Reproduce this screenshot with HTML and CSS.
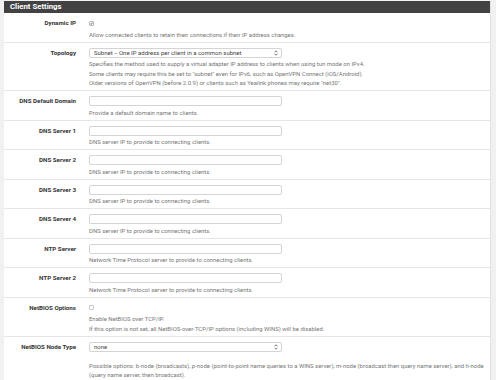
FILE: index.html
```html
<!DOCTYPE html>
<html lang="en">
<head>
    <meta charset="UTF-8">
    <meta name="viewport" content="width=device-width, initial-scale=1.0">
    <title>OpenVPN Server - Client Settings</title>
    <link rel="stylesheet" href="styles.css">
</head>
<body>
    <div class="panel">
        <div class="panel-heading">Client Settings</div>
        <div class="panel-body">

            <div class="form-row">
                <div class="row-label">Dynamic IP</div>
                <div class="row-field">
                    <div class="check-line"><span class="checkbox checked">&#10003;</span></div>
                    <div class="help">Allow connected clients to retain their connections if their IP address changes.</div>
                </div>
            </div>

            <div class="form-row">
                <div class="row-label">Topology</div>
                <div class="row-field">
                    <div class="select-box">
                        <span>Subnet -- One IP address per client in a common subnet</span>
                        <svg class="arrows" width="4" height="6" viewBox="0 0 4 6">
                            <path d="M0.5 2.3 L2 0.8 L3.5 2.3 M0.5 3.7 L2 5.2 L3.5 3.7" fill="none" stroke="#555" stroke-width="0.8"/>
                        </svg>
                    </div>
                    <div class="help">
                        Specifies the method used to supply a virtual adapter IP address to clients when using tun mode on IPv4.<br>
                        Some clients may require this be set to "subnet" even for IPv6, such as OpenVPN Connect (iOS/Android).<br>
                        Older versions of OpenVPN (before 2.0.9) or clients such as Yealink phones may require "net30".
                    </div>
                </div>
            </div>

            <div class="form-row">
                <div class="row-label">DNS Default Domain</div>
                <div class="row-field">
                    <input class="text-input" type="text">
                    <div class="help">Provide a default domain name to clients.</div>
                </div>
            </div>

            <div class="form-row">
                <div class="row-label">DNS Server 1</div>
                <div class="row-field">
                    <input class="text-input" type="text">
                    <div class="help">DNS server IP to provide to connecting clients.</div>
                </div>
            </div>

            <div class="form-row">
                <div class="row-label">DNS Server 2</div>
                <div class="row-field">
                    <input class="text-input" type="text">
                    <div class="help">DNS server IP to provide to connecting clients.</div>
                </div>
            </div>

            <div class="form-row">
                <div class="row-label">DNS Server 3</div>
                <div class="row-field">
                    <input class="text-input" type="text">
                    <div class="help">DNS server IP to provide to connecting clients.</div>
                </div>
            </div>

            <div class="form-row">
                <div class="row-label">DNS Server 4</div>
                <div class="row-field">
                    <input class="text-input" type="text">
                    <div class="help">DNS server IP to provide to connecting clients.</div>
                </div>
            </div>

            <div class="form-row">
                <div class="row-label">NTP Server</div>
                <div class="row-field">
                    <input class="text-input" type="text">
                    <div class="help">Network Time Protocol server to provide to connecting clients.</div>
                </div>
            </div>

            <div class="form-row">
                <div class="row-label">NTP Server 2</div>
                <div class="row-field">
                    <input class="text-input" type="text">
                    <div class="help">Network Time Protocol server to provide to connecting clients.</div>
                </div>
            </div>

            <div class="form-row">
                <div class="row-label">NetBIOS Options</div>
                <div class="row-field">
                    <div class="check-line"><span class="checkbox"></span></div>
                    <div class="help">
                        Enable NetBIOS over TCP/IP.<br>
                        If this option is not set, all NetBIOS-over-TCP/IP options (including WINS) will be disabled.
                    </div>
                </div>
            </div>

            <div class="form-row">
                <div class="row-label">NetBIOS Node Type</div>
                <div class="row-field">
                    <div class="select-box">
                        <span>none</span>
                        <svg class="arrows" width="4" height="6" viewBox="0 0 4 6">
                            <path d="M0.5 2.3 L2 0.8 L3.5 2.3 M0.5 3.7 L2 5.2 L3.5 3.7" fill="none" stroke="#555" stroke-width="0.8"/>
                        </svg>
                    </div>
                    <div class="help spaced">
                        Possible options: b-node (broadcasts), p-node (point-to-point name queries to a WINS server), m-node (broadcast then query name server), and h-node (query name server, then broadcast).
                    </div>
                </div>
            </div>

        </div>
    </div>
</body>
</html>
```

FILE: styles.css
```css
body {
    margin: 0;
    background-color: #f1f1f1;
    font-family: Roboto, "Liberation Sans", sans-serif;
    color: #333;
}

.panel {
    margin: 1px 5px 0 4px;
    background-color: #fff;
    border-right: 1px solid #e2e2e2;
}

.panel-heading {
    height: 12px;
    line-height: 12px;
    background-color: #424242;
    color: #fff;
    font-size: 7.8px;
    font-weight: bold;
    padding-left: 6px;
}

.form-row {
    display: grid;
    grid-template-columns: 72px 1fr;
    column-gap: 13px;
    padding: 5px 0 2.5px;
    border-bottom: 1px solid #e6e6e6;
}

.row-label {
    text-align: right;
    font-size: 6.2px;
    font-weight: bold;
    line-height: 10px;
    color: #333;
}

.row-field {
    display: flex;
    flex-direction: column;
    align-items: flex-start;
}

.help {
    margin-top: 1.5px;
    font-size: 5.95px;
    line-height: 9.5px;
    color: #777;
}

.help.spaced {
    margin-top: 9px;
}

.text-input {
    box-sizing: border-box;
    width: 193px;
    height: 10px;
    margin: 0;
    padding: 0 3px;
    border: 1px solid #d4d4d4;
    border-radius: 2px;
    background-color: #fff;
}

.select-box {
    box-sizing: border-box;
    width: 193px;
    height: 10px;
    display: flex;
    align-items: center;
    justify-content: space-between;
    padding: 0 3px 0 4px;
    border: 1px solid #d4d4d4;
    border-radius: 2px;
    font-size: 6px;
    color: #444;
}

.check-line {
    height: 10px;
    display: flex;
    align-items: center;
}

.checkbox {
    box-sizing: border-box;
    width: 5px;
    height: 5px;
    border: 1px solid #c8c8c8;
    border-radius: 1px;
    background-color: #fff;
    font-size: 4px;
    line-height: 3px;
    text-align: center;
    color: #222;
}

.checkbox.checked {
    border-color: #bbb;
    font-weight: bold;
}
```
